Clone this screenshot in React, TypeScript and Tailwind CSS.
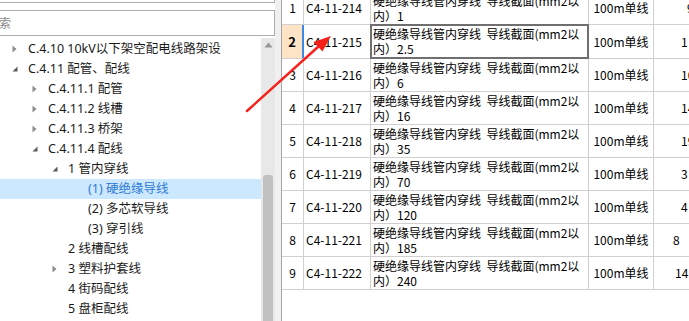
import React from 'react';

type Node = { lvl: number; arrow?: 'c' | 'e'; text: string; sel?: boolean; pad: string };

const tree: Node[] = [
  { lvl: 1, arrow: 'c', text: 'C.4.10 10kV以下架空配电线路架设', pad: 'pl-[12px]' },
  { lvl: 1, arrow: 'e', text: 'C.4.11 配管、配线', pad: 'pl-[12px]' },
  { lvl: 2, arrow: 'c', text: 'C.4.11.1 配管', pad: 'pl-[32px]' },
  { lvl: 2, arrow: 'c', text: 'C.4.11.2 线槽', pad: 'pl-[32px]' },
  { lvl: 2, arrow: 'c', text: 'C.4.11.3 桥架', pad: 'pl-[32px]' },
  { lvl: 2, arrow: 'e', text: 'C.4.11.4 配线', pad: 'pl-[32px]' },
  { lvl: 3, arrow: 'e', text: '1 管内穿线', pad: 'pl-[52px]' },
  { lvl: 4, text: '(1) 硬绝缘导线', sel: true, pad: 'pl-[72px]' },
  { lvl: 4, text: '(2) 多芯软导线', pad: 'pl-[72px]' },
  { lvl: 4, text: '(3) 穿引线', pad: 'pl-[72px]' },
  { lvl: 3, text: '2 线槽配线', pad: 'pl-[52px]' },
  { lvl: 3, arrow: 'c', text: '3 塑料护套线', pad: 'pl-[52px]' },
  { lvl: 3, text: '4 街码配线', pad: 'pl-[52px]' },
  { lvl: 3, text: '5 盘柜配线', pad: 'pl-[52px]' },
];

type Row = { n: number; code: string; s: string; v: string; vp: string; h: string; sel?: boolean };

const rows: Row[] = [
  { n: 1, code: 'C4-11-214', s: '1', v: '9', vp: 'pl-[33px]', h: 'h-[33px]' },
  { n: 2, code: 'C4-11-215', s: '2.5', v: '1', vp: 'pl-[27px]', h: 'h-[34px]', sel: true },
  { n: 3, code: 'C4-11-216', s: '6', v: '10', vp: 'pl-[27px]', h: 'h-[33px]' },
  { n: 4, code: 'C4-11-217', s: '16', v: '14', vp: 'pl-[27px]', h: 'h-[33px]' },
  { n: 5, code: 'C4-11-218', s: '35', v: '19', vp: 'pl-[27px]', h: 'h-[33px]' },
  { n: 6, code: 'C4-11-219', s: '70', v: '3', vp: 'pl-[27px]', h: 'h-[33px]' },
  { n: 7, code: 'C4-11-220', s: '120', v: '4', vp: 'pl-[27px]', h: 'h-[33px]' },
  { n: 8, code: 'C4-11-221', s: '185', v: '8', vp: 'pl-[19px]', h: 'h-[33px]' },
  { n: 9, code: 'C4-11-222', s: '240', v: '14', vp: 'pl-[21px]', h: 'h-[33px]' },
];

function Collapsed() {
  return (
    <svg width="6" height="8" viewBox="0 0 6 8">
      <polygon points="0.5,0.5 4.5,4 0.5,7.5" fill="#8c8c8c" />
    </svg>
  );
}

function Expanded() {
  return (
    <svg width="6" height="6" viewBox="0 0 6 6">
      <polygon points="5.5,0.5 5.5,5.5 0.5,5.5" fill="#595959" />
    </svg>
  );
}

export default function App() {
  return (
    <div className="relative w-[689px] h-[321px] overflow-hidden bg-white flex font-['Noto_Sans','Noto_Sans_CJK_SC',sans-serif]">
      {/* Left panel */}
      <div className="w-[275px] h-full flex flex-col bg-white">
        <div className="h-[3px] border-b border-r border-[#adadad] shrink-0" />
        <div className="mt-[7px] h-[26px] shrink-0 border border-l-0 border-[#adadad] flex items-center overflow-hidden">
          <span className="ml-[-13px] text-[12px] text-[#8a8a8a] font-['Noto_Sans_CJK_SC',sans-serif]">搜索</span>
        </div>
        <div className="mt-[2px] flex-1 flex min-h-0">
          <div className="w-[261px] pt-[1px] flex flex-col">
            {tree.map((t, i) => (
              <div
                key={i}
                className={`h-[20px] shrink-0 flex items-center ${t.pad} ${t.sel ? 'bg-[#cce8ff] text-[#2f7ad6]' : 'text-[#1b1b1b]'}`}
              >
                <div className="w-[16px] flex items-center">
                  {t.arrow === 'c' ? <Collapsed /> : t.arrow === 'e' ? <Expanded /> : null}
                </div>
                <span className="text-[12.5px] leading-[20px] whitespace-nowrap">{t.text}</span>
              </div>
            ))}
          </div>
          <div className="w-[14px] bg-[#e8e8e8] flex flex-col items-center">
            <div className="h-[12px] flex items-center justify-center pt-[2px]">
              <svg width="9" height="6" viewBox="0 0 9 6">
                <polygon points="4.5,0.5 8.5,5.5 0.5,5.5" fill="#979797" />
              </svg>
            </div>
            <div className="h-[125px]" />
            <div className="flex-1 w-[10px] rounded-t-[3px] bg-[#c1c1c1]" />
          </div>
        </div>
      </div>

      <div className="w-[6px] h-full bg-[#f0f0f0]" />

      {/* Table */}
      <div className="flex-1 h-full border-l border-[#a6a6a6] bg-white overflow-hidden text-[12px] text-black font-['Noto_Sans_CJK_SC',sans-serif]">
        <div className="mt-[-8px] flex flex-col">
          {rows.map((r) => (
            <div key={r.n} className={`flex ${r.h} border-b border-[#d0d0d0] shrink-0`}>
              <div
                className={`w-[22px] shrink-0 flex items-center justify-center ${
                  r.sel ? 'bg-[#fde4c6] border-r-2 border-[#3b8ae6] font-bold text-[13px]' : 'border-r border-[#d0d0d0]'
                }`}
              >
                {r.n}
              </div>
              <div className="w-[67px] shrink-0 border-r border-[#d0d0d0] pl-[2px] flex items-center whitespace-nowrap">
                {r.code}
              </div>
              <div className="relative w-[218px] shrink-0 border-r border-[#d0d0d0] pl-[2px] pt-[1px] leading-[15px]">
                <div className="whitespace-nowrap overflow-hidden">硬绝缘导线管内穿线&nbsp; 导线截面(mm2以</div>
                <div className="whitespace-nowrap">内）{r.s}</div>
                {r.sel ? (
                  <div className="absolute left-[-1px] right-[-1px] top-[-1px] bottom-[-1px] border-2 border-[#6f6f6f]" />
                ) : null}
              </div>
              <div className="w-[65px] shrink-0 border-r border-[#d0d0d0] flex items-center justify-center whitespace-nowrap">
                100m单线
              </div>
              <div className={`flex-1 flex items-center whitespace-nowrap overflow-hidden ${r.vp}`}>{r.v}</div>
            </div>
          ))}
        </div>
      </div>

      {/* Red annotation arrow */}
      <svg className="absolute left-0 top-0 pointer-events-none" width="689" height="321" viewBox="0 0 689 321">
        <line x1="247" y1="111" x2="319" y2="46" stroke="#f5221b" strokeWidth="2.5" strokeLinecap="round" />
        <polygon points="331,36 313.5,42 322.5,51.5" fill="#f5221b" />
      </svg>
    </div>
  );
}
